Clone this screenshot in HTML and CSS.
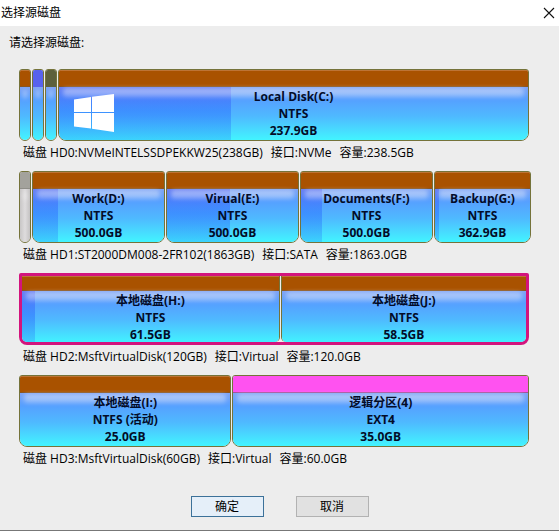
FILE: index.html
```html
<!DOCTYPE html>
<html lang="zh-CN">
<head>
<meta charset="utf-8">
<meta name="viewport" content="width=device-width, initial-scale=1">
<title>选择源磁盘</title>
<link rel="stylesheet" href="styles.css">
</head>
<body>
<main class="dialog">
  <header class="titlebar">
    <h1 class="title">选择源磁盘</h1>
    <button class="close" type="button" aria-label="关闭">
      <svg width="12" height="12" viewBox="0 0 12 12" aria-hidden="true"><path d="M1 1 11 11M11 1 1 11" fill="none" stroke="#111" stroke-width="1.1"/></svg>
    </button>
  </header>
  <section class="content">
    <p class="prompt">请选择源磁盘:</p>
    <div class="disks">
      <div class="disk">
        <button class="bar" type="button" aria-labelledby="hd0">
          <span class="part small"><span class="head"></span><span class="body"></span></span>
          <span class="part small"><span class="head blue"></span><span class="body"></span></span>
          <span class="part small"><span class="head olive"></span><span class="body"></span></span>
          <span class="part" style="flex-grow:471"><span class="head"></span><span class="body"><span class="used" style="width:36.6%"></span>
            <svg class="windows" width="40" height="39" viewBox="0 0 40 39" aria-hidden="true"><path d="M0 5.5 17 3v15H0zM18 2.8 40 0v18H18zM0 19h17v15.5L0 32.5zM18 19h22v19L18 34.8z" fill="#fff"/></svg>
            <span class="text">Local Disk(C:)<br>NTFS<br>237.9GB</span></span></span>
        </button>
        <p class="caption" id="hd0"><span>磁盘 HD0:NVMeINTELSSDPEKKW25(238GB)</span><span>接口:NVMe</span><span>容量:238.5GB</span></p>
      </div>
      <div class="disk">
        <button class="bar wide" type="button" aria-labelledby="hd1">
          <span class="part small free"><span class="head gray"></span><span class="body"></span></span>
          <span class="part" style="flex-grow:500"><span class="head"></span><span class="body"><span class="used" style="width:19%"></span><span class="text">Work(D:)<br>NTFS<br>500.0GB</span></span></span>
          <span class="part" style="flex-grow:500"><span class="head"></span><span class="body"><span class="used" style="width:48%"></span><span class="text">Virual(E:)<br>NTFS<br>500.0GB</span></span></span>
          <span class="part" style="flex-grow:500"><span class="head"></span><span class="body"><span class="used" style="width:16%"></span><span class="text">Documents(F:)<br>NTFS<br>500.0GB</span></span></span>
          <span class="part" style="flex-grow:363"><span class="head"></span><span class="body"><span class="used" style="width:4%"></span><span class="text">Backup(G:)<br>NTFS<br>362.9GB</span></span></span>
        </button>
        <p class="caption" id="hd1"><span>磁盘 HD1:ST2000DM008-2FR102(1863GB)</span><span>接口:SATA</span><span>容量:1863.0GB</span></p>
      </div>
      <div class="disk">
        <button class="bar selected" type="button" aria-pressed="true" aria-labelledby="hd2">
          <span class="part" style="flex-grow:615"><span class="head"></span><span class="body"><span class="used" style="width:5%"></span><span class="text">本地磁盘(H:)<br>NTFS<br>61.5GB</span></span></span>
          <span class="part" style="flex-grow:585"><span class="head"></span><span class="body"><span class="text">本地磁盘(J:)<br>NTFS<br>58.5GB</span></span></span>
        </button>
        <p class="caption" id="hd2"><span>磁盘 HD2:MsftVirtualDisk(120GB)</span><span>接口:Virtual</span><span>容量:120.0GB</span></p>
      </div>
      <div class="disk">
        <button class="bar" type="button" aria-labelledby="hd3">
          <span class="part" style="flex-grow:25"><span class="head"></span><span class="body"><span class="text">本地磁盘(I:)<br>NTFS (活动)<br>25.0GB</span></span></span>
          <span class="part" style="flex-grow:35"><span class="head pink"></span><span class="body"><span class="text">逻辑分区(4)<br>EXT4<br>35.0GB</span></span></span>
        </button>
        <p class="caption" id="hd3"><span>磁盘 HD3:MsftVirtualDisk(60GB)</span><span>接口:Virtual</span><span>容量:60.0GB</span></p>
      </div>
    </div>
  </section>
  <footer class="actions">
    <button class="action primary" type="button">确定</button>
    <button class="action" type="button">取消</button>
  </footer>
</main>
</body>
</html>
```
FILE: styles.css
```css
* { box-sizing: border-box; }

body {
  margin: 0;
  background: #ededed;
  color: #000;
  font: 12px/18px "Open Sans", "Noto Sans CJK SC", sans-serif;
}

button {
  font: inherit;
  color: inherit;
  padding: 0;
  border: 0;
}

h1, p { margin: 0; font-size: 12px; font-weight: 400; }

.dialog {
  display: flex;
  flex-direction: column;
  min-height: 100vh;
  border-bottom: 1px solid #777;
}

.titlebar {
  display: flex;
  align-items: center;
  justify-content: space-between;
  height: 26px;
  padding: 0 4px 0 1px;
  background: #fff;
}

.close { display: flex; background: none; }

.content { padding: 8px 30px 0 19px; }

.prompt { margin-left: -10px; }

.disks {
  display: grid;
  gap: 9px;
  margin-top: 17px;
}

.bar {
  display: flex;
  gap: 1px;
  width: 100%;
  height: 72px;
  background: none;
}

.wide { width: calc(100% + 2px); }

.part {
  display: flex;
  flex-direction: column;
  flex: 1 1 0;
  min-width: 0;
  height: 100%;
  overflow: hidden;
  border: 1px solid #75733a;
  border-radius: 3px 3px 8px 8px;
}

.small { flex: 0 0 12px; border-radius: 3px 3px 6px 6px; }

.head {
  height: 17px;
  flex: none;
  background: #a95200;
  border-bottom: 1px solid #8a5520;
  box-shadow: inset 0 1px #bd7436;
}

.blue { background: #5762ee; border-color: #5762ee; box-shadow: none; }
.olive { background: #5d603c; border-color: #5d603c; box-shadow: none; }
.gray { background: #a3a29c; border-color: #8f8e88; box-shadow: none; }
.pink { background: #ff52f0; border-color: #a3529a; box-shadow: none; }

.body {
  position: relative;
  flex: 1;
  padding-top: 1px;
  background: linear-gradient(#7fa3f4 0, #56a0ff 24%, #4fb9ff 55%, #42f4ff 100%);
}

.body::after {
  content: "";
  position: absolute;
  inset: 1px 4px auto;
  height: 9px;
  border-radius: 4px;
  background: linear-gradient(rgb(255 255 255 / 45%), rgb(255 255 255 / 25%));
  filter: blur(2px);
}

.small .body::after { inset: 3px 3px auto; }

.free .body { background: linear-gradient(90deg, #c8c6c6, #dedcdd 50%, #c4c2c2); }

.used {
  position: absolute;
  inset: 0 auto 0 0;
  background: linear-gradient(rgb(75 75 240 / 40%), rgb(32 95 255 / 40%) 45%, rgb(38 115 245 / 25%));
}

.windows {
  position: absolute;
  z-index: 2;
  left: 15px;
  top: 7px;
}

.text {
  position: relative;
  z-index: 1;
  display: block;
  color: #030c28;
  font-weight: 700;
  line-height: 17px;
  text-align: center;
  white-space: nowrap;
}

.selected {
  border: 3px solid #d3147d;
  border-radius: 2px 2px 8px 8px;
}

.selected .part {
  border-width: 0;
  border-radius: 0 0 5px 5px;
}

.selected .part:first-child { border-right-width: 1px; }
.selected .part:last-child { border-left-width: 1px; }

.selected .head { height: 15px; }

.caption {
  display: flex;
  gap: 8px;
  height: 21px;
  padding: 3px 0 0 4px;
  white-space: nowrap;
}

.actions {
  display: flex;
  justify-content: center;
  gap: 32px;
  margin-top: 28px;
  padding-bottom: 12px;
}

.action {
  width: 73px;
  height: 21px;
  border: 1px solid #b2b2b2;
  background: #e1e1e1;
  line-height: 18px;
}

.primary { border-color: #3c7199; background: #e5eff9; }
```
